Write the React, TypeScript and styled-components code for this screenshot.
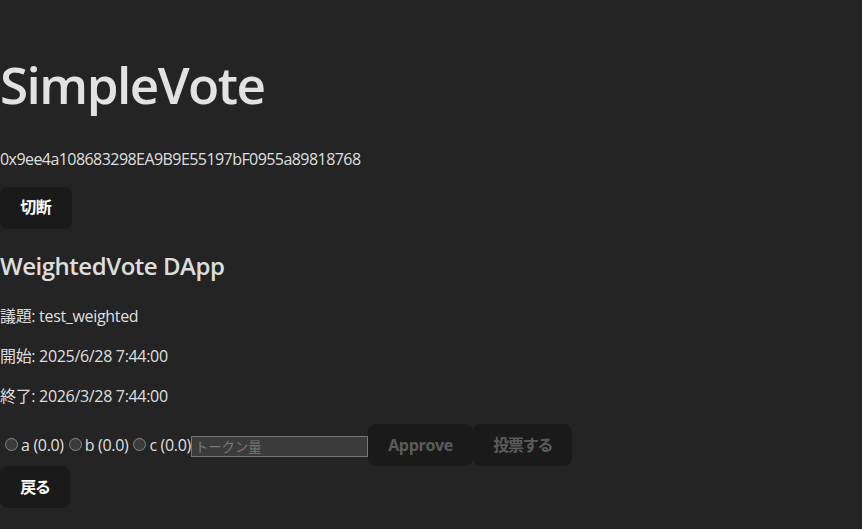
import React from "react";
import styled, { createGlobalStyle } from "styled-components";

const GlobalStyle = createGlobalStyle`
  :root {
    color-scheme: dark;
  }
  html, body {
    margin: 0;
    padding: 0;
  }
  body {
    background-color: #242424;
    color: rgba(255, 255, 255, 0.87);
    font-family: "Open Sans", "Noto Sans CJK JP", sans-serif;
    font-size: 16px;
    line-height: 1.5;
    font-weight: 400;
    -webkit-font-smoothing: antialiased;
  }
`;

const Page = styled.div`
  display: flex;
  align-items: center;
  min-height: 100vh;
  min-width: 320px;
`;

const Content = styled.div`
  display: flow-root;
  padding-top: 1px;
`;

const Title = styled.h1`
  font-size: 3.2em;
  line-height: 1.1;
  margin: 0.67em 0;
  font-weight: 600;
  letter-spacing: -0.03em;
`;

const SubTitle = styled.h2`
  font-size: 1.5em;
  margin: 0.83em 0;
  font-weight: 600;
  letter-spacing: -0.02em;
`;

const Text = styled.p<{ $tight?: boolean }>`
  margin: 1em 0;
  letter-spacing: ${(p) => (p.$tight ? "-0.035em" : "-0.02em")};
`;

const Button = styled.button<{ $kana?: boolean }>`
  border-radius: 8px;
  border: 1px solid transparent;
  padding: 0.6em 1.2em;
  font-size: 1em;
  line-height: 1.3;
  font-weight: 700;
  font-family: inherit;
  background-color: #1a1a1a;
  color: #ffffff;
  cursor: pointer;
  letter-spacing: ${(p) => (p.$kana ? "-0.08em" : "-0.02em")};

  &:disabled {
    color: rgba(255, 255, 255, 0.3);
    cursor: default;
  }
`;

const VoteRow = styled.div``;

const Choice = styled.label`
  letter-spacing: -0.02em;
`;

const Radio = styled.input`
  width: 13px;
  height: 13px;
  margin: 3px 3px 0 5px;
`;

const AmountInput = styled.input`
  box-sizing: border-box;
  width: 177px;
  height: 21px;
  padding: 1px 3px;
  border: 1px solid #767676;
  border-radius: 0;
  background-color: #3b3b3b;
  color: #ffffff;
  font-family: "Noto Sans CJK JP", sans-serif;
  font-size: 13.33px;
  vertical-align: -1px;

  &::placeholder {
    color: #7a7a7a;
  }
`;

export default function App() {
  return (
    <>
      <GlobalStyle />
      <Page>
        <Content>
          <Title>SimpleVote</Title>
          <Text $tight>0x9ee4a108683298EA9B9E55197bF0955a89818768</Text>
          <Button>切断</Button>
          <SubTitle>WeightedVote DApp</SubTitle>
          <Text>議題: test_weighted</Text>
          <Text>開始: 2025/6/28 7:44:00</Text>
          <Text>終了: 2026/3/28 7:44:00</Text>
          <VoteRow>
            <Choice><Radio type="radio" name="choice" />a (0.0)</Choice>
            <Choice><Radio type="radio" name="choice" />b (0.0)</Choice>
            <Choice><Radio type="radio" name="choice" />c (0.0)</Choice>
            <AmountInput type="number" placeholder="トークン量" />
            <Button disabled>Approve</Button>
            <Button disabled $kana>投票する</Button>
          </VoteRow>
          <Button $kana>戻る</Button>
        </Content>
      </Page>
    </>
  );
}
